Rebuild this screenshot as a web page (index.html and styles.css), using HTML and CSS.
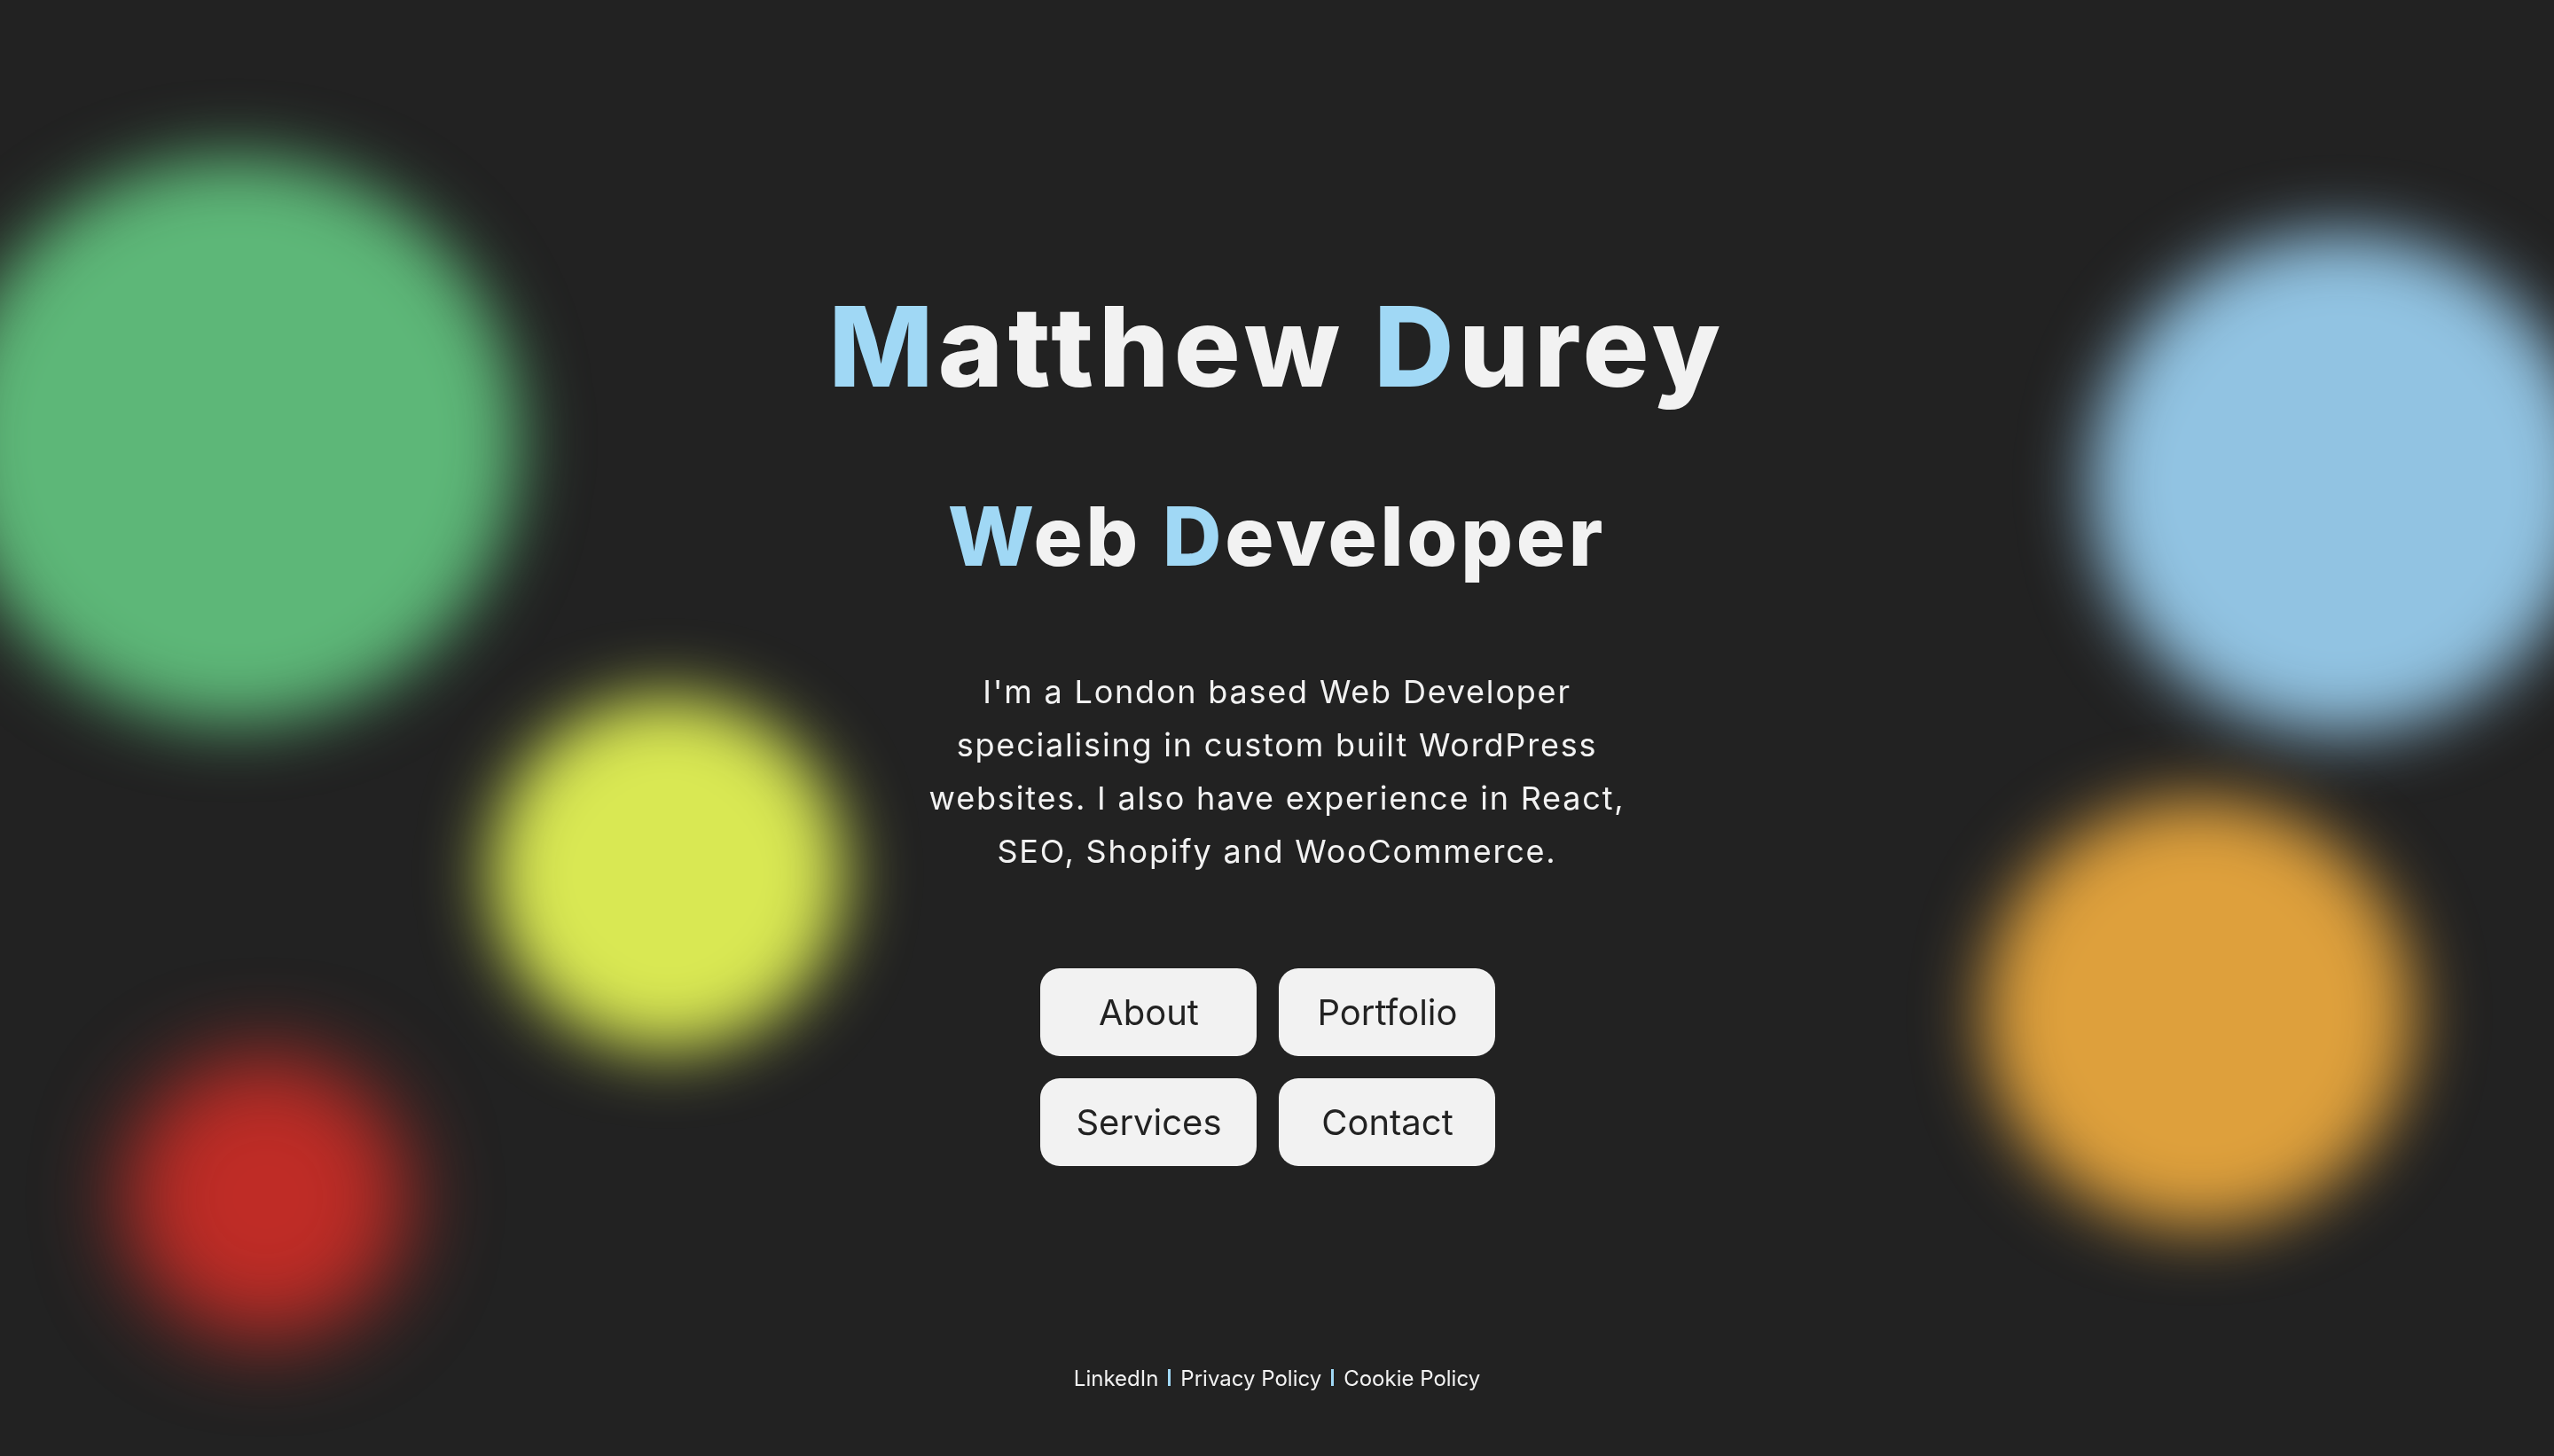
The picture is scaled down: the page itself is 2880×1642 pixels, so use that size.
FILE: index.html
```html
<!DOCTYPE html>
<html lang="en">
<head>
<meta charset="utf-8">
<title>Matthew Durey</title>
<link rel="stylesheet" href="styles.css">
</head>
<body>
<div class="blobs" aria-hidden="true">
  <div class="blob blob-green"></div>
  <div class="blob blob-yellow"></div>
  <div class="blob blob-red"></div>
  <div class="blob blob-blue"></div>
  <div class="blob blob-orange"></div>
</div>
<div class="page">
  <main class="hero">
    <h1 class="title"><span class="accent">M</span>atthew <span class="accent">D</span>urey</h1>
    <h2 class="subtitle"><span class="accent">W</span>eb <span class="accent">D</span>eveloper</h2>
    <p class="intro">I'm a London based Web Developer<br>specialising in custom built WordPress<br>websites. I also have experience in React,<br>SEO, Shopify and WooCommerce.</p>
    <nav class="nav">
      <a class="btn" href="#">About</a>
      <a class="btn" href="#">Portfolio</a>
      <a class="btn" href="#">Services</a>
      <a class="btn" href="#">Contact</a>
    </nav>
  </main>
  <footer class="footer">
    <a href="#">LinkedIn</a>
    <span class="sep"></span>
    <a href="#">Privacy Policy</a>
    <span class="sep"></span>
    <a href="#">Cookie Policy</a>
  </footer>
</div>
</body>
</html>
```
FILE: styles.css
```css
* { box-sizing: border-box; }
html, body {
  margin: 0;
  padding: 0;
  background: #222222;
  color: #f2f2f2;
  font-family: Inter, "Noto Sans", sans-serif;
  overflow: hidden;
}
.blobs {
  position: fixed;
  inset: 0;
  z-index: 0;
  overflow: hidden;
}
.blob {
  position: absolute;
  border-radius: 50%;
  filter: blur(38px);
}
.blob-green  { left: -55px;  top: 177px;  width: 640px; height: 640px; background: #5db778; }
.blob-yellow { left: 553px;  top: 785px;  width: 400px; height: 400px; background: #d9e853; }
.blob-red    { left: 140px;  top: 1190px; width: 320px; height: 320px; background: #bf2c26; filter: blur(48px); }
.blob-blue   { left: 2358px; top: 263px;  width: 564px; height: 564px; background: #91c3e2; }
.blob-orange { left: 2238px; top: 901px;  width: 484px; height: 484px; background: #dea03c; }

.page {
  position: relative;
  z-index: 1;
  min-height: 100vh;
  display: flex;
  flex-direction: column;
  align-items: center;
}
.hero {
  display: flex;
  flex-direction: column;
  align-items: center;
  text-align: center;
  padding-top: 316px;
}
.accent { color: #a0d8f5; }
.title {
  margin: 0;
  font-size: 125px;
  line-height: 150px;
  font-weight: 800;
  letter-spacing: 5.5px;
}
.subtitle {
  margin: 84px 0 0;
  font-size: 92px;
  line-height: 110px;
  font-weight: 800;
  letter-spacing: 3.8px;
}
.intro {
  margin: 90px 0 0;
  font-size: 36px;
  line-height: 60px;
  font-weight: 400;
  letter-spacing: 1.8px;
}
.nav {
  margin-top: 102px;
  padding-right: 20px;
  display: grid;
  grid-template-columns: 244px 244px;
  grid-auto-rows: 99px;
  gap: 25px;
}
.btn {
  display: flex;
  align-items: center;
  justify-content: center;
  background: #f2f2f2;
  color: #222222;
  border-radius: 22px;
  text-decoration: none;
  font-size: 40px;
  font-weight: 400;
}
.footer {
  margin-top: auto;
  padding-bottom: 72px;
  display: flex;
  align-items: center;
  gap: 11px;
  font-size: 24px;
  line-height: 30px;
}
.footer a {
  color: #f2f2f2;
  text-decoration: none;
}
.sep {
  display: inline-block;
  width: 3px;
  height: 19px;
  background: #a0d8f5;
  margin-top: -4px;
}
```
